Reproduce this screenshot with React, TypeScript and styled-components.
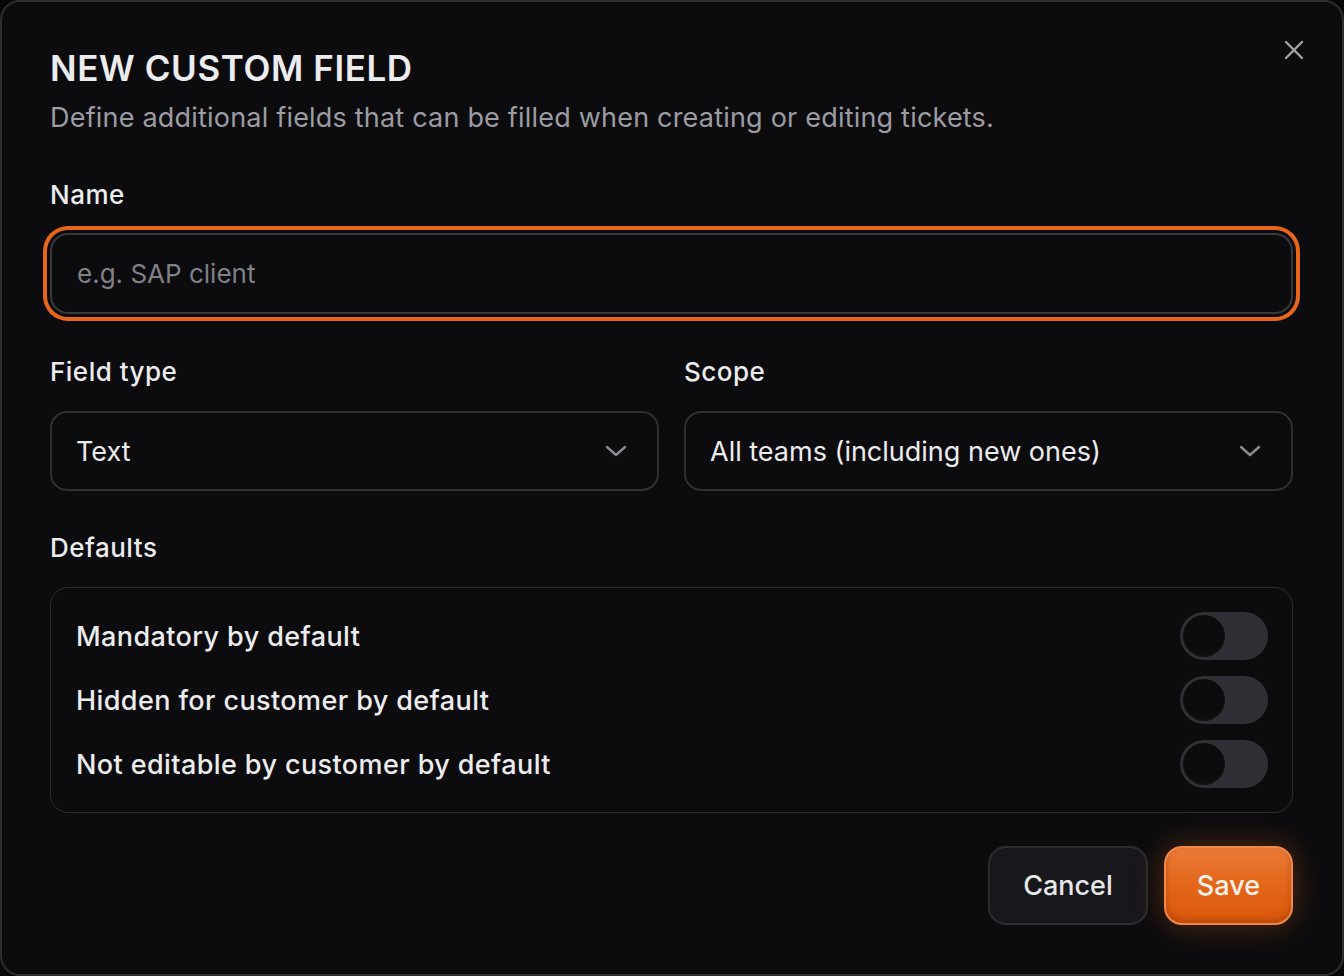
import { useState } from "react";
import styled, { createGlobalStyle } from "styled-components";

const GlobalStyle = createGlobalStyle`
  html, body {
    margin: 0;
    padding: 0;
    background: #08080a;
  }
  * {
    box-sizing: border-box;
  }
  body {
    font-family: Inter, "Noto Sans", "Liberation Sans", sans-serif;
    color: #e7e7ea;
  }
`;

const Dialog = styled.div`
  position: relative;
  width: 1344px;
  height: 976px;
  background: #0c0c0e;
  border: 2px solid #2d2d32;
  border-radius: 20px;
  padding: 43px 49px 0 48px;
  display: flex;
  flex-direction: column;
`;

const CloseButton = styled.button`
  position: absolute;
  top: 34px;
  right: 34px;
  width: 28px;
  height: 28px;
  padding: 0;
  border: none;
  background: none;
  color: #a2a2a8;
  display: flex;
  align-items: center;
  justify-content: center;
  cursor: pointer;
`;

const Title = styled.h1`
  margin: 0;
  font-size: 35px;
  line-height: 46px;
  font-weight: 600;
  letter-spacing: 0.6px;
  color: #ececee;
`;

const Subtitle = styled.p`
  margin: 7px 0 0;
  font-size: 27px;
  line-height: 40px;
  letter-spacing: 0.2px;
  color: #9c9ca2;
`;

const Label = styled.label<{ $top: number }>`
  display: block;
  margin-top: ${(p) => p.$top}px;
  font-size: 26px;
  line-height: 36px;
  font-weight: 500;
  letter-spacing: 0.5px;
  color: #ececee;
`;

const NameInput = styled.input`
  margin-top: 20px;
  width: 100%;
  height: 81px;
  padding: 0 25px;
  background: #0c0c0e;
  border: 2px solid #38383e;
  border-radius: 18px;
  outline: none;
  box-shadow: 0 0 0 3px #0c0c0e, 0 0 0 7px #e8661b;
  font-family: inherit;
  font-size: 26px;
  color: #ececee;

  &::placeholder {
    color: #808086;
  }
`;

const FieldGrid = styled.div`
  display: grid;
  grid-template-columns: 1fr 1fr;
  column-gap: 25px;
`;

const Field = styled.div`
  display: flex;
  flex-direction: column;
`;

const Select = styled.div`
  margin-top: 21px;
  height: 80px;
  padding: 0 30px 0 24px;
  border: 2px solid #2f2f34;
  border-radius: 17px;
  display: flex;
  align-items: center;
  justify-content: space-between;
  font-size: 27px;
  color: #ececee;
  cursor: pointer;

  svg {
    color: #8a8a90;
    flex-shrink: 0;
  }
`;

const DefaultsBox = styled.div`
  margin-top: 21px;
  border: 1px solid #2b2b30;
  border-radius: 18px;
  padding: 24px 24px 24px 25px;
  display: flex;
  flex-direction: column;
  gap: 16px;
`;

const Row = styled.div`
  display: flex;
  align-items: center;
  justify-content: space-between;
  height: 48px;
  font-size: 27px;
  font-weight: 500;
  letter-spacing: 0.4px;
  color: #ececee;
`;

const Switch = styled.button<{ $on: boolean }>`
  width: 88px;
  height: 48px;
  padding: 3px;
  border: none;
  border-radius: 24px;
  background: ${(p) => (p.$on ? "#e8661b" : "#2f2f35")};
  display: flex;
  justify-content: ${(p) => (p.$on ? "flex-end" : "flex-start")};
  cursor: pointer;
`;

const Knob = styled.span`
  width: 42px;
  height: 42px;
  border-radius: 50%;
  background: #0c0c0e;
  box-shadow: inset 0 -2px 3px rgba(255, 255, 255, 0.04);
`;

const Footer = styled.div`
  margin-top: 33px;
  display: flex;
  justify-content: flex-end;
  gap: 16px;
`;

const Button = styled.button<{ $primary?: boolean }>`
  height: 79px;
  padding: 0 ${(p) => (p.$primary ? 31 : 33)}px;
  border-radius: 18px;
  font-family: inherit;
  font-size: 27px;
  font-weight: 500;
  cursor: pointer;
  border: 2px solid ${(p) => (p.$primary ? "#f0884a" : "#2c2c31")};
  background: ${(p) =>
    p.$primary
      ? "linear-gradient(180deg, #ea7a38 0%, #e3661a 50%, #d9570b 100%)"
      : "#18181c"};
  color: ${(p) => (p.$primary ? "#f8f0ea" : "#e7e7ea")};
  box-shadow: ${(p) =>
    p.$primary
      ? "0 0 28px rgba(232, 102, 27, 0.35), inset 0 -3px 6px rgba(120, 40, 0, 0.35)"
      : "none"};
`;

const Chevron = () => (
  <svg width="22" height="12" viewBox="0 0 22 12" fill="none">
    <path d="M2 2l9 8 9-8" stroke="currentColor" strokeWidth="2.4" strokeLinecap="round" strokeLinejoin="round" />
  </svg>
);

const defaults = [
  "Mandatory by default",
  "Hidden for customer by default",
  "Not editable by customer by default",
];

export default function App() {
  const [flags, setFlags] = useState([false, false, false]);

  const toggle = (i: number) => setFlags(flags.map((f, j) => (j === i ? !f : f)));

  return (
    <>
      <GlobalStyle />
      <Dialog>
        <CloseButton aria-label="Close">
          <svg width="20" height="20" viewBox="0 0 20 20" fill="none">
            <path d="M2 2l16 16M18 2L2 18" stroke="currentColor" strokeWidth="2.4" strokeLinecap="round" />
          </svg>
        </CloseButton>

        <Title>NEW CUSTOM FIELD</Title>
        <Subtitle>Define additional fields that can be filled when creating or editing tickets.</Subtitle>

        <Label $top={39}>Name</Label>
        <NameInput placeholder="e.g. SAP client" />

        <FieldGrid>
          <Field>
            <Label $top={40}>Field type</Label>
            <Select>
              <span>Text</span>
              <Chevron />
            </Select>
          </Field>
          <Field>
            <Label $top={40}>Scope</Label>
            <Select>
              <span>All teams (including new ones)</span>
              <Chevron />
            </Select>
          </Field>
        </FieldGrid>

        <Label $top={39}>Defaults</Label>
        <DefaultsBox>
          {defaults.map((d, i) => (
            <Row key={d}>
              <span>{d}</span>
              <Switch $on={flags[i]} onClick={() => toggle(i)}>
                <Knob />
              </Switch>
            </Row>
          ))}
        </DefaultsBox>

        <Footer>
          <Button>Cancel</Button>
          <Button $primary>Save</Button>
        </Footer>
      </Dialog>
    </>
  );
}
